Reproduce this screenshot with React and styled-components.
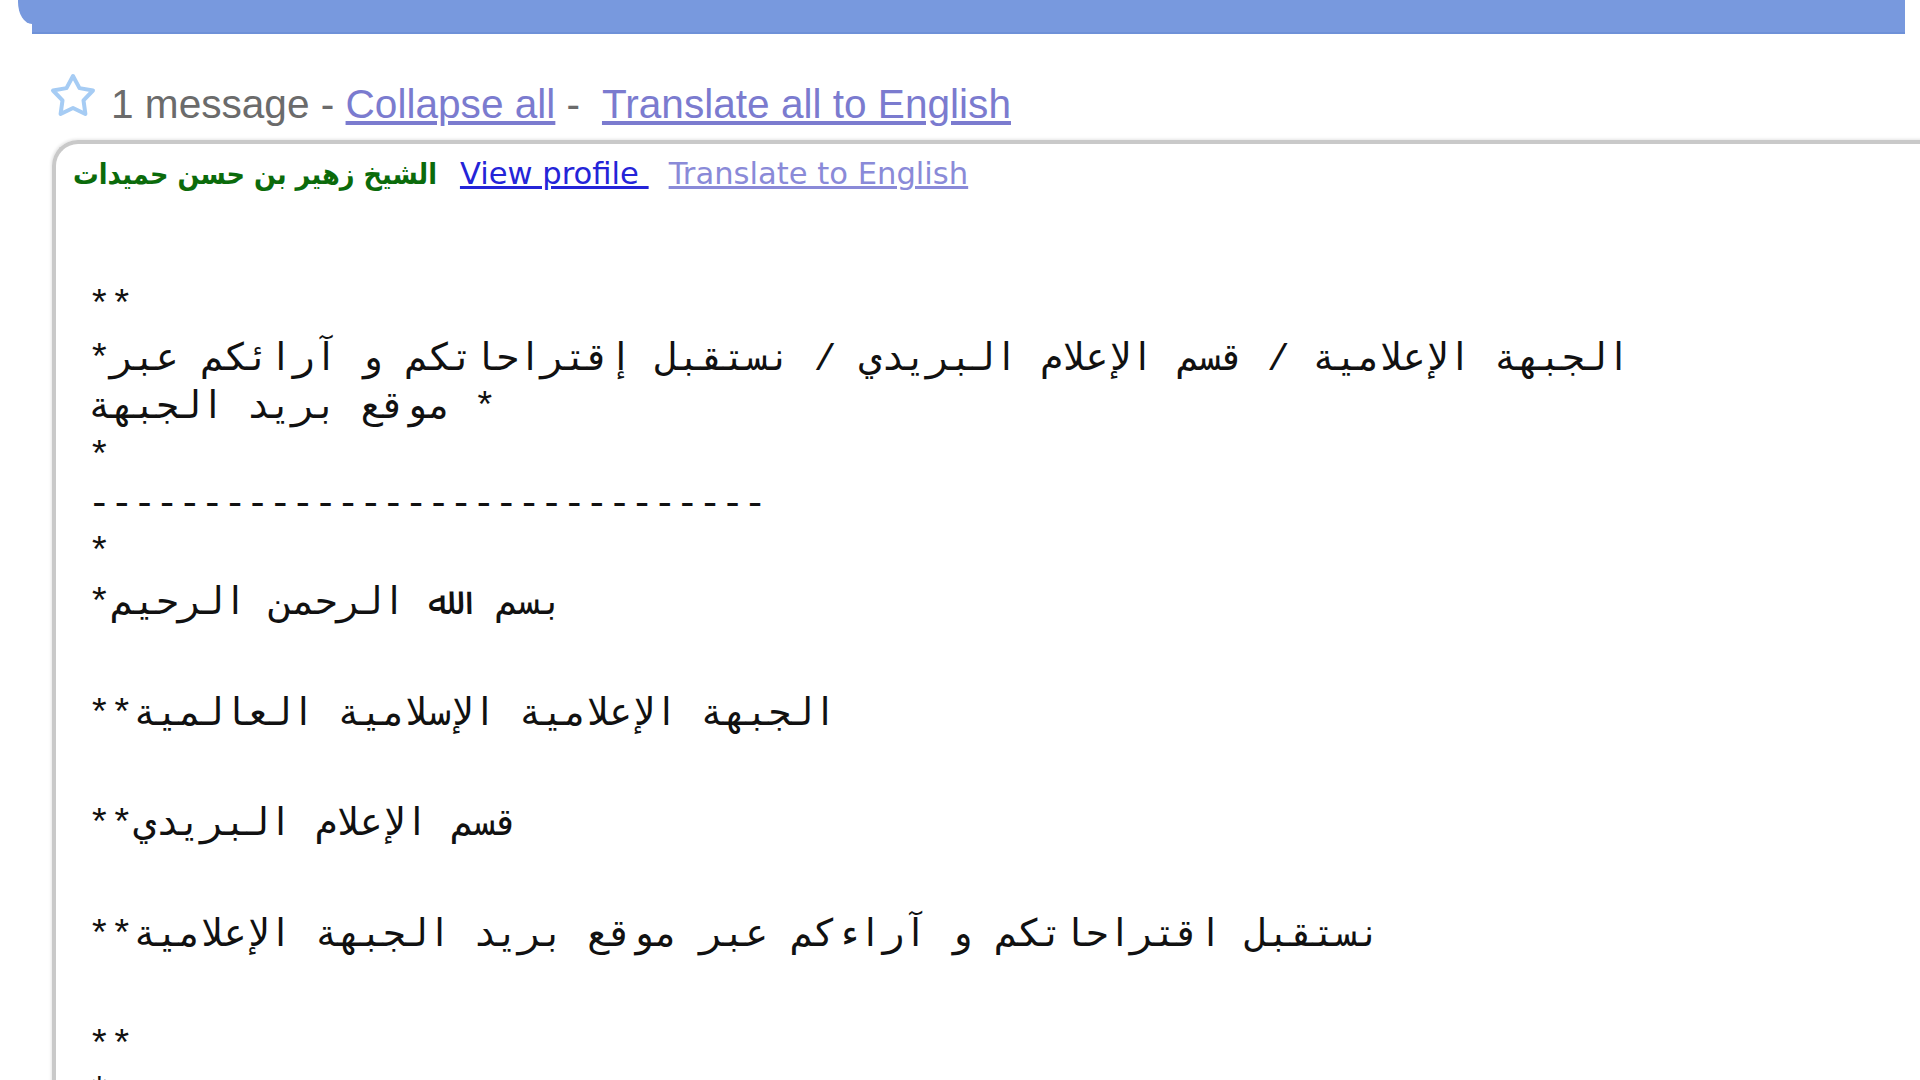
import React from 'react';
import styled, { createGlobalStyle } from 'styled-components';

const GlobalStyles = createGlobalStyle`
  html, body {
    margin: 0;
    padding: 0;
    background: #ffffff;
    overflow: hidden;
  }
`;

const Page = styled.div`
  width: 1920px;
  height: 1080px;
  display: flex;
  flex-direction: column;
  overflow: hidden;
`;

const TopBar = styled.div`
  display: flex;
  align-items: flex-start;
  height: 34px;
  margin-left: 18px;
  width: 1887px;
`;

const BarCorner = styled.div`
  width: 14px;
  height: 24px;
  background: #7899de;
  border-bottom-left-radius: 14px 22px;
`;

const BarFill = styled.div`
  flex: 1;
  height: 32px;
  background: #7899de;
  border-bottom: 2px solid #6e91d8;
`;

const ThreadHeader = styled.div`
  display: flex;
  align-items: flex-start;
  margin: 38px 0 0 49px;
  height: 48px;
  font-family: 'Liberation Sans', Arial, sans-serif;
  font-size: 40.6px;
  line-height: 48px;
  color: #6b6b6b;
  white-space: pre;
`;

const StarIcon = styled.svg`
  width: 48px;
  height: 48px;
  margin-right: 14px;
  flex-shrink: 0;
`;

const HeaderText = styled.span`
  margin-top: 8px;
`;

const ThreadLink = styled.a`
  color: #7b7bcf;
  text-decoration: underline;
  cursor: pointer;
`;

const MessageCard = styled.div`
  flex: 1;
  margin: 20px 0 0 52px;
  width: 1853px;
  padding: 10px 0 0 17px;
  border-top: 4px solid #c9c9c9;
  border-left: 4px solid #c9c9c9;
  border-top-left-radius: 26px;
  box-shadow: -1px -1px 3px rgba(0, 0, 0, 0.1);
`;

const MessageHead = styled.div`
  display: flex;
  align-items: baseline;
  height: 40px;
  line-height: 40px;
  font-size: 30.6px;
  font-family: 'DejaVu Sans', Verdana, sans-serif;
  white-space: pre;
`;

const Author = styled.span`
  font-family: 'DejaVu Sans Condensed', 'DejaVu Sans', sans-serif;
  font-size: 28.5px;
  font-weight: bold;
  color: #0b6b0b;
  margin-right: 23px;
`;

const ProfileLink = styled.a`
  color: ${(p) => (p.$faded ? '#8a8ad8' : '#2424d8')};
  text-decoration: underline;
  margin-right: ${(p) => (p.$faded ? '0' : '20px')};
  cursor: pointer;
`;

const Body = styled.div`
  margin: 89px 0 0 15px;
  font-family: 'Liberation Mono', 'DejaVu Sans Mono', monospace;
  font-size: 37.7px;
  color: #111111;
  direction: ltr;
`;

const Line = styled.div`
  height: 47px;
  line-height: 47px;
  margin-top: ${(p) => p.$gap || 0}px;
  white-space: pre;
`;

const lines = [
  { text: '**', gap: 0 },
  { text: '*الجبهة الإعلامية / قسم الإعلام البريدي / نستقبل إقتراحاتكم و آرائكم عبر', gap: 7 },
  { text: 'موقع بريد الجبهة *', gap: 1 },
  { text: '*', gap: 2 },
  { text: '------------------------------', gap: 0 },
  { text: '*', gap: 2 },
  { text: '*بسم  ﷲ الرحمن الرحيم', gap: 4 },
  { text: '', gap: 9 },
  { text: '**الجبهة الإعلامية الإسلامية العالمية', gap: 8 },
  { text: '', gap: 8 },
  { text: '**قسم الإعلام البريدي', gap: 8 },
  { text: '', gap: 8 },
  { text: '**نستقبل اقتراحاتكم و آراءكم عبر موقع بريد الجبهة الإعلامية', gap: 9 },
  { text: '', gap: 11 },
  { text: '**', gap: 5 },
  { text: '*', gap: 0 },
];

function Star() {
  return (
    <StarIcon viewBox="0 0 48 48">
      <path
        d="M24 4 L30.5 16.1 L44 18.5 L34.5 28.4 L36.4 42 L24 36 L11.6 42 L13.5 28.4 L4 18.5 L17.5 16.1 Z"
        fill="#ffffff"
        stroke="#a6ccf4"
        strokeWidth="4"
        strokeLinejoin="round"
      />
    </StarIcon>
  );
}

function App() {
  return (
    <Page>
      <GlobalStyles />
      <TopBar>
        <BarCorner />
        <BarFill />
      </TopBar>
      <ThreadHeader>
        <Star />
        <HeaderText>
          1 message - <ThreadLink>Collapse all</ThreadLink> -{'  '}
          <ThreadLink>Translate all to English</ThreadLink>
        </HeaderText>
      </ThreadHeader>
      <MessageCard>
        <MessageHead>
          <Author>الشيخ زهير بن حسن حميدات</Author>
          <ProfileLink>View profile </ProfileLink>
          <ProfileLink $faded>Translate to English</ProfileLink>
        </MessageHead>
        <Body>
          {lines.map((line, i) => (
            <Line key={i} $gap={line.gap}>
              {line.text}
            </Line>
          ))}
        </Body>
      </MessageCard>
    </Page>
  );
}

export default App;
